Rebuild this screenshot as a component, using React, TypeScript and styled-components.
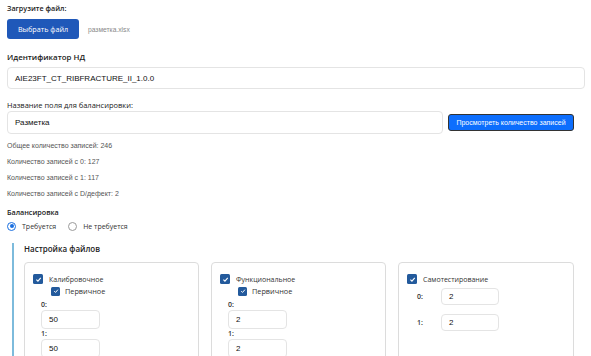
import styled, { createGlobalStyle } from "styled-components";

const GlobalStyle = createGlobalStyle`
  html, body {
    margin: 0;
    padding: 0;
    background: #fff;
  }
  body {
    font-family: "Open Sans", "Liberation Sans", sans-serif;
    color: #222;
  }
`;

// ================================================
//              Components
// ================================================
const Page = styled.div`
  padding: 2px 6px 0 7px;
  width: 591px;
  height: 356px;
  overflow: hidden;
  box-sizing: border-box;
`;
const Label = styled.div<{ bold?: boolean; mt?: number; size?: number }>`
  font-size: ${(p) => p.size ?? 8}px;
  line-height: 12px;
  font-weight: ${(p) => (p.bold ? 600 : 400)};
  color: #222;
  margin-top: ${(p) => p.mt ?? 0}px;
`;
const FileRow = styled.div`
  display: flex;
  align-items: center;
  margin-top: 5px;
`;
const FileBtn = styled.div`
  width: 72px;
  height: 20px;
  border-radius: 3px;
  background: #1f58b9;
  color: #fff;
  font-size: 7.2px;
  display: flex;
  align-items: center;
  justify-content: center;
`;
const FileName = styled.span`
  margin-left: 9px;
  font-size: 6.7px;
  color: #888;
  font-family: "Liberation Sans", sans-serif;
`;
const TextInput = styled.div<{ w?: number; h?: number }>`
  box-sizing: border-box;
  width: ${(p) => (p.w ? `${p.w}px` : "100%")};
  height: ${(p) => p.h ?? 22}px;
  border: 1px solid #e4e4e4;
  border-radius: 4px;
  display: flex;
  align-items: center;
  padding-left: 7px;
  font-family: "Liberation Sans", sans-serif;
  font-size: 8px;
  color: #111;
`;
const FieldRow = styled.div`
  display: flex;
  align-items: center;
  gap: 5px;
`;
const CountBtn = styled.div`
  box-sizing: border-box;
  width: 126px;
  height: 17px;
  border-radius: 3px;
  border: 1px solid #333;
  background: #0d6efd;
  color: #fff;
  font-family: "Liberation Sans", sans-serif;
  font-size: 7px;
  display: flex;
  align-items: center;
  justify-content: center;
`;
const Stats = styled.div`
  margin-top: 4px;
`;
const Stat = styled.div`
  font-family: "Liberation Sans", sans-serif;
  font-size: 7px;
  line-height: 16px;
  color: #555;
`;
const RadioRow = styled.div`
  display: flex;
  align-items: center;
  margin-top: 1px;
  height: 14px;
`;
const Radio = styled.span<{ checked?: boolean }>`
  box-sizing: border-box;
  width: 9px;
  height: 9px;
  border-radius: 50%;
  border: 1px solid ${(p) => (p.checked ? "#1a6fe0" : "#9a9a9a")};
  display: inline-flex;
  align-items: center;
  justify-content: center;
  margin-right: 6px;
  &::after {
    content: "";
    width: 4px;
    height: 4px;
    border-radius: 50%;
    background: ${(p) => (p.checked ? "#1a6fe0" : "transparent")};
  }
`;
const RadioText = styled.span`
  font-size: 7px;
  color: #333;
  margin-right: 12px;
`;
const Settings = styled.div`
  margin: 10px 0 0 5px;
  border-left: 2px solid #7dbbdc;
  padding: 0 0 0 10px;
`;
const Cards = styled.div`
  display: grid;
  grid-template-columns: 175px 175px 176px;
  gap: 12px;
  margin-top: 7px;
`;
const Card = styled.div`
  box-sizing: border-box;
  height: 110px;
  border: 1px solid #dcdcdc;
  border-radius: 4px;
  padding: 10px 8px 0 8px;
`;
const CheckRow = styled.div<{ indent?: number; mt?: number }>`
  display: flex;
  align-items: center;
  margin-left: ${(p) => p.indent ?? 0}px;
  margin-top: ${(p) => p.mt ?? 0}px;
  height: 12px;
`;
const Box = styled.span<{ size?: number }>`
  width: ${(p) => p.size ?? 10}px;
  height: ${(p) => p.size ?? 10}px;
  border-radius: 1.5px;
  background: #235a9c;
  display: inline-flex;
  align-items: center;
  justify-content: center;
  margin-right: ${(p) => (p.size === 9 ? 5 : 6)}px;
`;
const CheckText = styled.span<{ size?: number }>`
  font-size: ${(p) => p.size ?? 7}px;
  color: #333;
`;
const NumLabel = styled.div<{ mt?: number }>`
  font-size: 7px;
  font-weight: 600;
  color: #333;
  margin: ${(p) => p.mt ?? 0}px 0 0 8px;
  line-height: 10px;
`;
const NumBox = styled.div`
  margin-left: 8px;
`;
const InlineRow = styled.div<{ mt?: number }>`
  display: flex;
  align-items: center;
  margin: ${(p) => p.mt ?? 0}px 0 0 10px;
`;
const InlineLabel = styled.span`
  font-size: 7px;
  font-weight: 600;
  color: #333;
  width: 24px;
`;

const Check = ({ size = 10 }: { size?: number }) => (
  <Box size={size}>
    <svg width={size - 3} height={size - 3} viewBox="0 0 10 10">
      <path d="M2 5.2 L4.2 7.4 L8.2 2.8" stroke="#fff" strokeWidth="1.6" fill="none" />
    </svg>
  </Box>
);

// ================================================
//                App
// ================================================
const App = () => {
  const stats = [
    "Общее количество записей: 246",
    "Количество записей с 0: 127",
    "Количество записей с 1: 117",
    "Количество записей с D/дефект: 2",
  ];

  return (
    <Page>
      <GlobalStyle />
      <Label bold size={7.2}>Загрузите файл:</Label>
      <FileRow>
        <FileBtn>Выбрать файл</FileBtn>
        <FileName>разметка.xlsx</FileName>
      </FileRow>

      <Label bold mt={12} size={7.9}>Идентификатор НД</Label>
      <TextInput style={{ marginTop: 4 }}>AIE23FT_CT_RIBFRACTURE_II_1.0.0</TextInput>

      <Label mt={10} size={7.5}>Название поля для балансировки:</Label>
      <FieldRow>
        <TextInput w={436} h={23}>Разметка</TextInput>
        <CountBtn>Просмотреть количество записей</CountBtn>
      </FieldRow>

      <Stats>
        {stats.map((s) => (
          <Stat key={s}>{s}</Stat>
        ))}
      </Stats>

      <Label bold mt={4} size={7.2}>Балансировка</Label>
      <RadioRow>
        <Radio checked />
        <RadioText>Требуется</RadioText>
        <Radio />
        <RadioText>Не требуется</RadioText>
      </RadioRow>

      <Settings>
        <Label bold size={8}>Настройка файлов</Label>
        <Cards>
          <Card>
            <CheckRow>
              <Check />
              <CheckText>Калибровочное</CheckText>
            </CheckRow>
            <CheckRow indent={18}>
              <Check size={9} />
              <CheckText size={7.3}>Первичное</CheckText>
            </CheckRow>
            <NumLabel mt={3}>0:</NumLabel>
            <NumBox>
              <TextInput w={59} h={19}>50</TextInput>
            </NumBox>
            <NumLabel>1:</NumLabel>
            <NumBox>
              <TextInput w={59} h={19}>50</TextInput>
            </NumBox>
          </Card>
          <Card>
            <CheckRow>
              <Check />
              <CheckText>Функциональное</CheckText>
            </CheckRow>
            <CheckRow indent={18}>
              <Check size={9} />
              <CheckText size={7.3}>Первичное</CheckText>
            </CheckRow>
            <NumLabel mt={3}>0:</NumLabel>
            <NumBox>
              <TextInput w={59} h={19}>2</TextInput>
            </NumBox>
            <NumLabel>1:</NumLabel>
            <NumBox>
              <TextInput w={59} h={19}>2</TextInput>
            </NumBox>
          </Card>
          <Card>
            <CheckRow>
              <Check />
              <CheckText>Самотестирование</CheckText>
            </CheckRow>
            <InlineRow mt={3}>
              <InlineLabel>0:</InlineLabel>
              <TextInput w={58} h={17}>2</TextInput>
            </InlineRow>
            <InlineRow mt={9}>
              <InlineLabel>1:</InlineLabel>
              <TextInput w={58} h={17}>2</TextInput>
            </InlineRow>
          </Card>
        </Cards>
      </Settings>
    </Page>
  );
};

export default App;
